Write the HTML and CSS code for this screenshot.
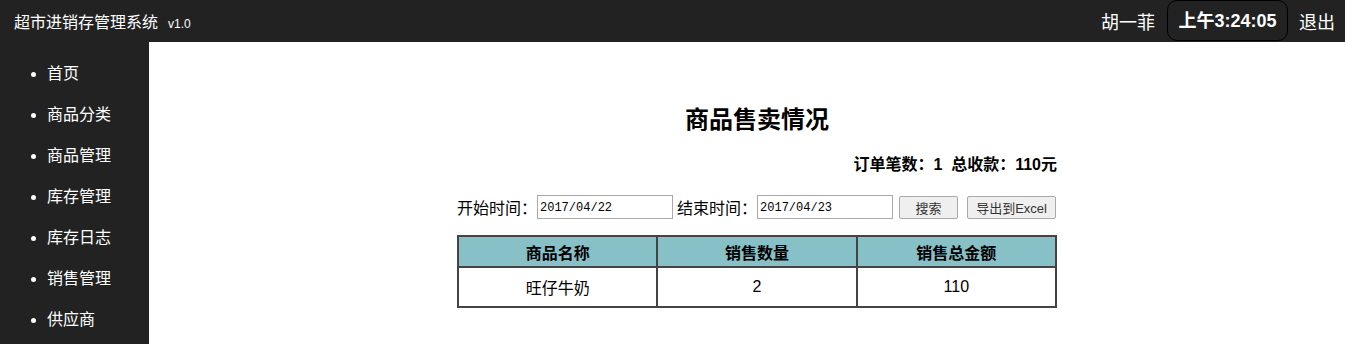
FILE: index.html
```html
<!DOCTYPE html>
<html>
<head>
<meta charset="utf-8"/>
<title>超市进销存管理系统</title>
<link rel="stylesheet" href="styles.css">
</head>
<body>

<div class="topbar">
	<div class="brand">超市进销存管理系统<small>v1.0</small></div>
	<div class="user">
		<span class="uname">胡一菲</span>
		<span class="clock">上午3:24:05</span>
		<a class="logout" href="#">退出</a>
	</div>
</div>

<div class="wrap">
	<ul class="menu">
		<li><a href="#">首页</a></li>
		<li><a href="#">商品分类</a></li>
		<li><a href="#">商品管理</a></li>
		<li><a href="#">库存管理</a></li>
		<li><a href="#">库存日志</a></li>
		<li><a href="#">销售管理</a></li>
		<li><a href="#">供应商</a></li>
	</ul>

	<div class="main">
		<div class="box">
			<h2>商品售卖情况</h2>
			<div class="sum">订单笔数：1&nbsp; 总收款：110元</div>
			<form class="search">
				<label>开始时间：</label><input type="text" value="2017/04/22">
				<label>结束时间：</label><input type="text" value="2017/04/23">
				<button type="button" class="btn1">搜索</button>
				<button type="button" class="btn2">导出到Excel</button>
			</form>
			<table class="list">
				<tr><th>商品名称</th><th>销售数量</th><th>销售总金额</th></tr>
				<tr><td>旺仔牛奶</td><td>2</td><td>110</td></tr>
			</table>
		</div>
	</div>
</div>

</body>
</html>
```
FILE: styles.css
```css
body {
	margin: 0;
	font-family: "Liberation Sans", "Noto Sans CJK SC", sans-serif;
	color: #000;
}
a {
	color: #fff;
	text-decoration: none;
}
/* top bar */
.topbar {
	height: 42px;
	background: #222;
	color: #fff;
	display: flex;
	align-items: center;
	justify-content: space-between;
}
.brand {
	font-size: 16px;
	padding-left: 14px;
}
.brand small {
	font-size: 12px;
	margin-left: 10px;
}
.user {
	display: flex;
	align-items: center;
	height: 42px;
	font-size: 18px;
}
.uname {
	margin-right: 12px;
}
.clock {
	font-weight: bold;
	height: 41px;
	line-height: 41px;
	padding: 0 10px;
	border: 1px solid #000;
	border-radius: 10px;
	box-sizing: border-box;
	margin-top: -1px;
	width: 121px;
	text-align: center;
}
.logout {
	margin: 0 10px 0 11px;
}
/* side menu */
.wrap {
	display: flex;
	min-height: calc(100vh - 42px);
}
.menu {
	width: 149px;
	flex: none;
	box-sizing: border-box;
	margin: 0;
	padding: 11px 0 0 47px;
	background: #222;
	color: #fff;
	font-size: 16px;
}
.menu li {
	line-height: 41px;
}
/* content */
.main {
	flex: 1;
	padding-left: 20px;
}
.box {
	width: 600px;
	margin: 0 auto;
}
h2 {
	font-size: 24px;
	text-align: center;
	margin: 60px 0 0;
	line-height: 36px;
}
.sum {
	text-align: right;
	font-weight: bold;
	font-size: 16px;
	margin-top: 15px;
	line-height: 24px;
}
.search {
	margin-top: 18px;
	display: flex;
	align-items: center;
	font-size: 16px;
}
.search input {
	width: 136px;
	height: 24px;
	box-sizing: border-box;
	border: 1px solid #a9a9a9;
	font-family: "Liberation Mono", monospace;
	font-size: 12px;
	padding: 2px 2px 0;
	margin: 0 4px 0 0;
}
.search button {
	height: 23px;
	font-size: 13px;
	font-family: "Liberation Sans", "Noto Sans CJK SC", sans-serif;
	background: #efefef;
	border: 1px solid #a9a9a9;
	border-radius: 2px;
	color: #333;
	padding: 0;
}
.btn1 {
	width: 59px;
	margin-left: 2px;
}
.btn2 {
	width: 89px;
	margin-left: 9px;
}
.list {
	margin-top: 16px;
	width: 600px;
	border-collapse: collapse;
	border: 2px solid #444;
	font-size: 16px;
}
.list th, .list td {
	border: 2px solid #444;
	text-align: center;
	width: 33.3%;
}
.list th {
	background: #88c0c8;
	height: 29px;
	padding: 0;
}
.list td {
	height: 38px;
	padding: 0;
}
```
